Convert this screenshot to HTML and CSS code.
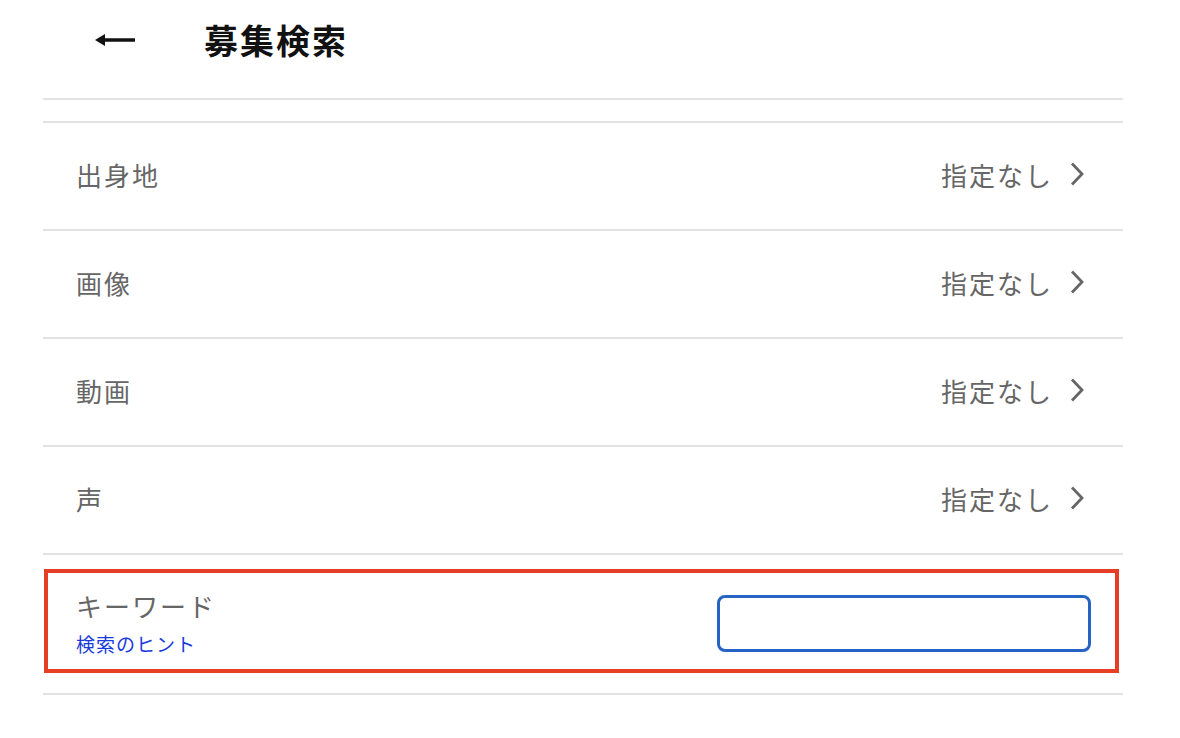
FILE: index.html
```html
<!DOCTYPE html>
<html lang="ja">
<head>
<meta charset="utf-8">
<link rel="stylesheet" href="styles.css">
</head>
<body>
<div class="page">
  <header class="header">
    <span class="back" aria-label="戻る">
      <svg width="42" height="16" viewBox="0 0 42 16"><path d="M4 8 H40" stroke="#111" stroke-width="3.4"/><path d="M0 8 L10 2 L10 14 Z" fill="#111"/></svg>
    </span>
    <h1 class="title">募集検索</h1>
  </header>
  <div class="spacer"></div>
  <ul class="list">
    <li class="row"><span class="label">出身地</span><span class="value">指定なし<svg class="chev" width="16" height="26" viewBox="0 0 16 26"><path d="M3 2.5 L13 13 L3 23.5" fill="none" stroke="#666" stroke-width="2.8"/></svg></span></li>
    <li class="row"><span class="label">画像</span><span class="value">指定なし<svg class="chev" width="16" height="26" viewBox="0 0 16 26"><path d="M3 2.5 L13 13 L3 23.5" fill="none" stroke="#666" stroke-width="2.8"/></svg></span></li>
    <li class="row"><span class="label">動画</span><span class="value">指定なし<svg class="chev" width="16" height="26" viewBox="0 0 16 26"><path d="M3 2.5 L13 13 L3 23.5" fill="none" stroke="#666" stroke-width="2.8"/></svg></span></li>
    <li class="row"><span class="label">声</span><span class="value">指定なし<svg class="chev" width="16" height="26" viewBox="0 0 16 26"><path d="M3 2.5 L13 13 L3 23.5" fill="none" stroke="#666" stroke-width="2.8"/></svg></span></li>
    <li class="keyword-row">
      <div class="keyword-box">
        <div class="kw-text">
          <span class="label">キーワード</span>
          <a class="hint">検索のヒント</a>
        </div>
        <input class="kw-input" type="text">
      </div>
    </li>
  </ul>
</div>
</body>
</html>
```

FILE: styles.css
```css
* { box-sizing: border-box; }
html, body { margin: 0; padding: 0; background: #fff; }
body { font-family: "Noto Sans CJK JP", "Noto Sans", sans-serif; }
.page { width: 1080px; margin-left: 43px; }
.header {
  height: 100px;
  display: flex;
  align-items: center;
  padding-bottom: 20px;
  border-bottom: 2px solid #e2e2e2;
}
.back { display: flex; margin-left: 52px; width: 42px; margin-top: 2px; }
.title {
  margin: 0 0 0 67px;
  font-size: 34px;
  font-weight: 700;
  color: #111;
  letter-spacing: 2px;
}
.spacer { height: 21px; }
.list { list-style: none; margin: 0; padding: 0; }
.row {
  height: 108px;
  border-top: 2px solid #e2e2e2;
  display: flex;
  align-items: center;
  justify-content: space-between;
  padding: 0 38px 4px 33px;
}
.label { font-size: 26px; color: #666; font-weight: 400; letter-spacing: 2px; }
.value { font-size: 26px; color: #666; display: flex; align-items: center; letter-spacing: 2px; }
.chev { margin-left: 16px; }
.keyword-row {
  border-top: 2px solid #e2e2e2;
  border-bottom: 2px solid #e2e2e2;
  padding: 14px 4px 20px 1px;
}
.keyword-box {
  height: 104px;
  border: 4px solid #e53e25;
  display: flex;
  align-items: center;
  justify-content: space-between;
  padding: 0 24px 0 28px;
}
.kw-text { display: flex; flex-direction: column; padding-top: 4px; }
.kw-text .label { line-height: 34px; }
.hint { font-size: 19px; color: #1a3bdc; margin-top: 7px; letter-spacing: 1px; }
.kw-input {
  width: 374px;
  height: 57px;
  border: 3px solid #2563c5;
  border-radius: 8px;
  outline: none;
  background: #fff;
  margin-top: 5px;
}
```
